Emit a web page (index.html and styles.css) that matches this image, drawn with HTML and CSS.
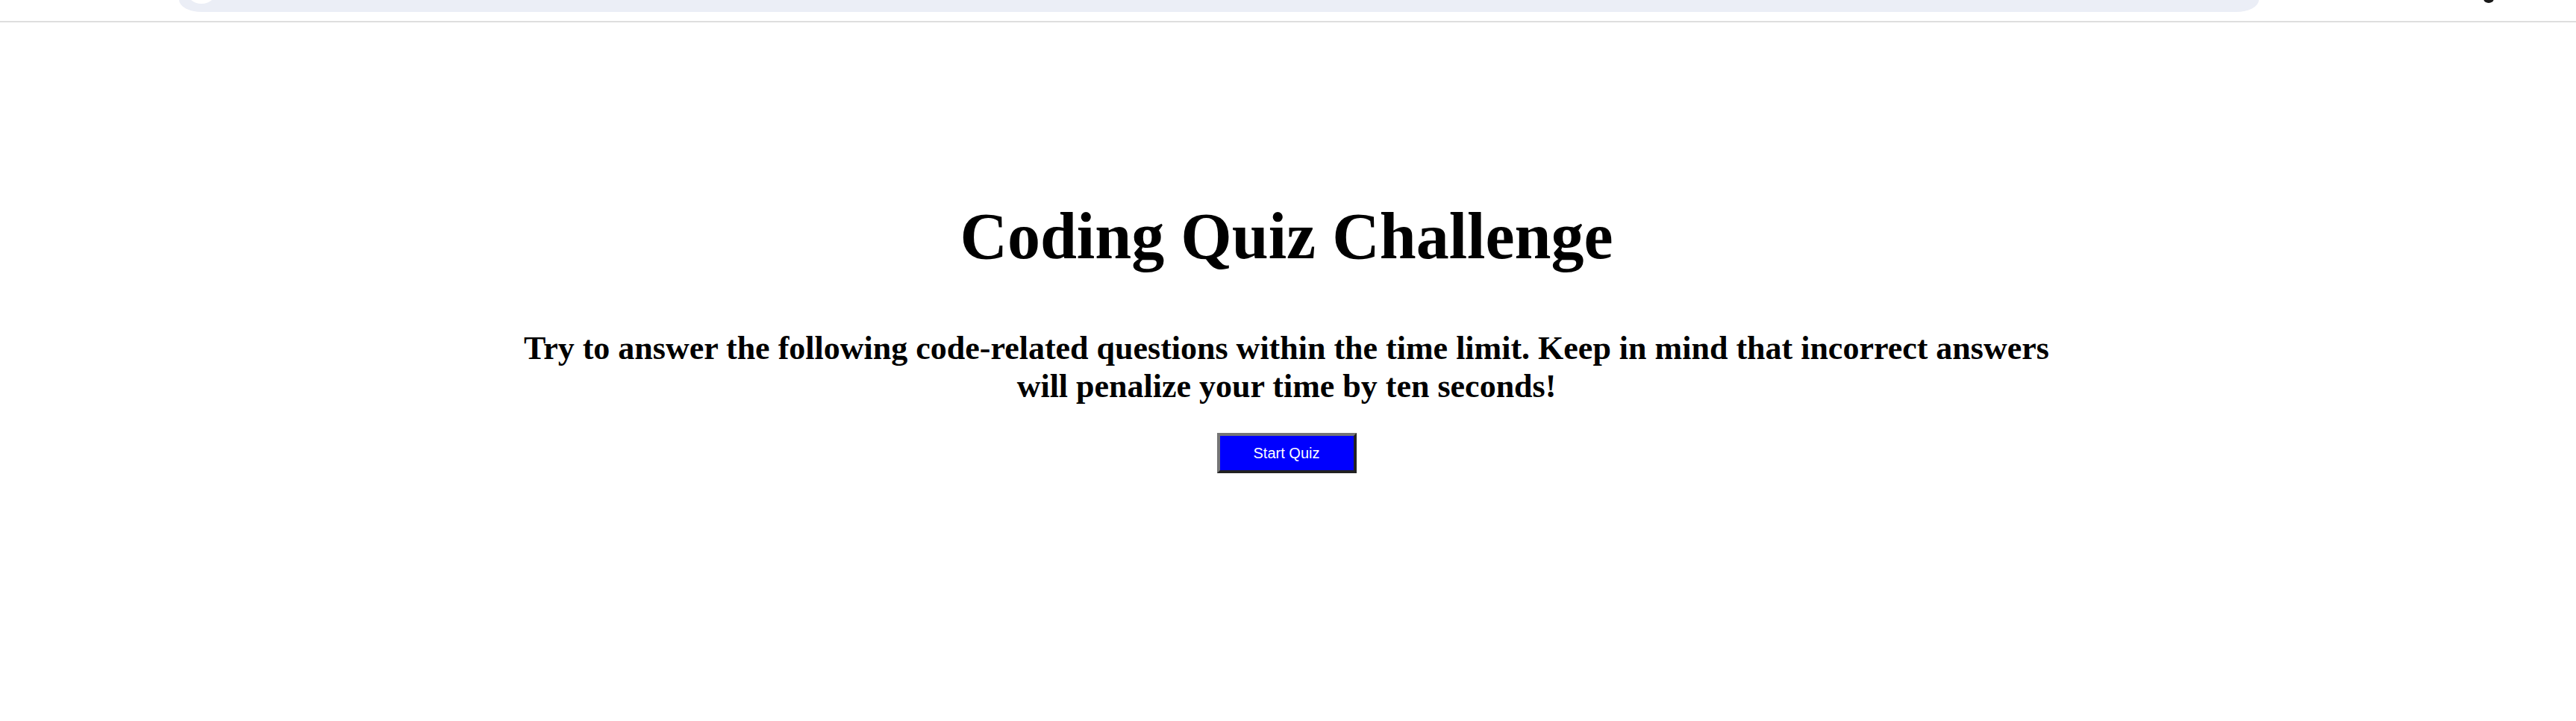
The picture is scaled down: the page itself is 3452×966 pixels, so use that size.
FILE: index.html
```html
<!DOCTYPE html>
<html lang="en">
<head>
<meta charset="utf-8">
<title>Coding Quiz Challenge</title>
<link rel="stylesheet" href="styles.css">
</head>
<body>
<header class="topbar">
  <div class="address">
    <span class="address-dot"></span>
  </div>
  <span class="profile"></span>
</header>
<main class="start">
  <h1 class="title">Coding Quiz Challenge</h1>
  <p class="intro">Try to answer the following code-related questions within the time limit. Keep in mind that incorrect answers will penalize your time by ten seconds!</p>
  <button class="start-btn" type="button">Start Quiz</button>
</main>
</body>
</html>
```
FILE: styles.css
```css
html, body {
  margin: 0;
  padding: 0;
  background: #ffffff;
}
body {
  font-family: "Liberation Serif", "Times New Roman", serif;
  color: #000;
}
.topbar {
  position: relative;
  height: 28px;
  border-bottom: 2px solid #dedede;
  overflow: hidden;
}
.address {
  position: relative;
  margin-left: 240px;
  width: 2787px;
  height: 16px;
  background: #ebeef6;
  border-radius: 0 0 30px 30px / 0 0 16px 16px;
  overflow: hidden;
}
.address-dot {
  position: absolute;
  left: 10px;
  top: -30px;
  width: 40px;
  height: 35px;
  border-radius: 50%;
  background: #ffffff;
}
.profile {
  position: absolute;
  left: 3328px;
  top: -8px;
  width: 14px;
  height: 12px;
  border-radius: 50%;
  background: #1a1a1a;
}
.start {
  padding: 236px 4px 0 0;
  text-align: center;
}
.title {
  margin: 0;
  font-size: 88px;
  font-weight: bold;
  line-height: normal;
}
.intro {
  margin: 74px auto 37px;
  max-width: 2080px;
  font-size: 44px;
  font-weight: bold;
  line-height: normal;
}
.start-btn {
  width: 187px;
  height: 54px;
  padding: 0;
  background: #0000ff;
  color: #ffffff;
  font-family: "Liberation Sans", Arial, sans-serif;
  font-size: 20px;
  border-width: 4px;
  border-style: solid;
  border-color: #767676 #222222 #222222 #767676;
  cursor: pointer;
}
```
